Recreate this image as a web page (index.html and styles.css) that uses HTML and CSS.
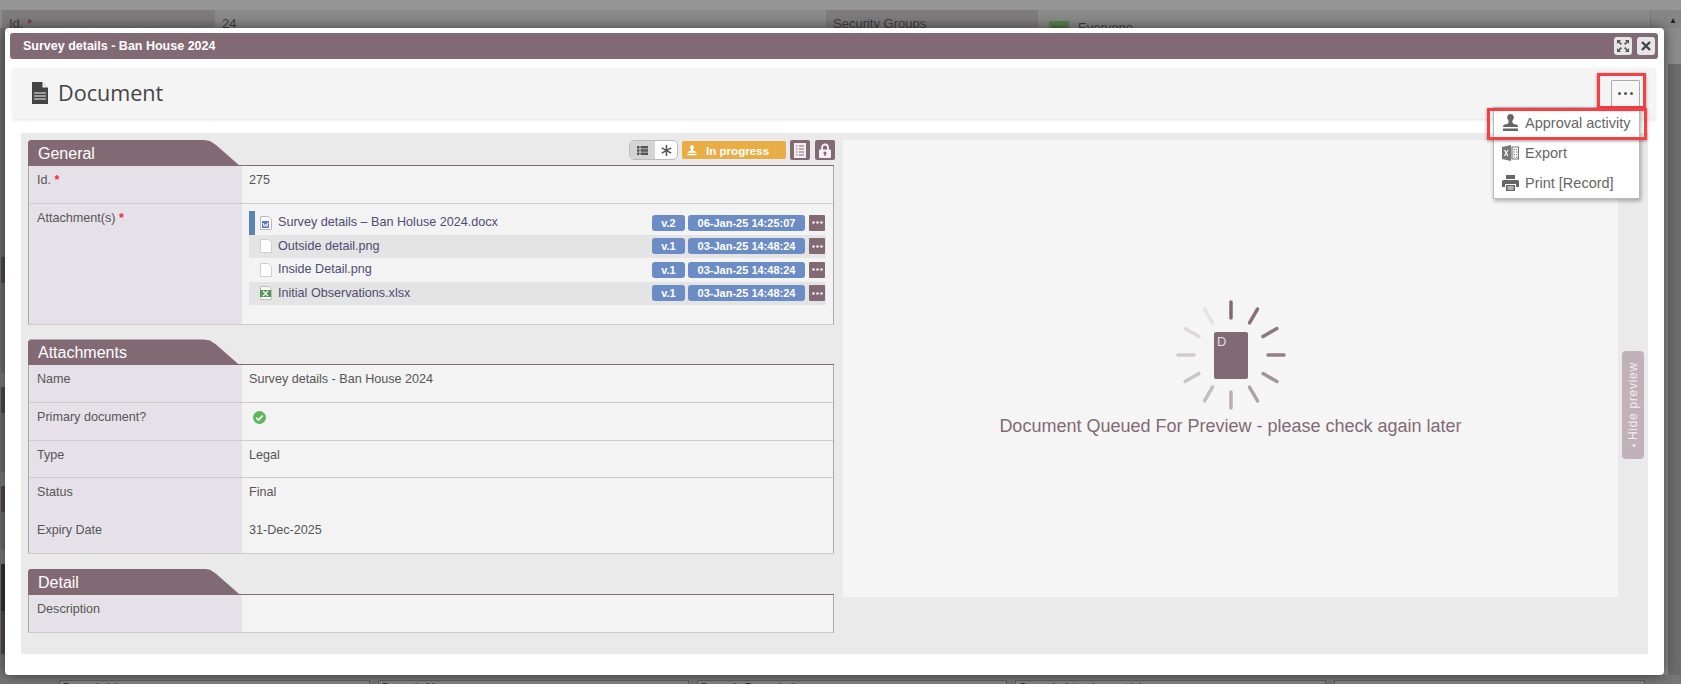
FILE: index.html
```html
<!DOCTYPE html>
<html lang="en">
<head>
    <meta charset="UTF-8">
    <meta name="viewport" content="width=device-width, initial-scale=1.0">
    <title>Survey details - Ban House 2024</title>
    <link rel="stylesheet" href="styles.css">
</head>
<body>
    <!-- Dimmed page behind the dialog -->
    <div class="page">
        <div class="page-top"></div>
        <div class="page-row">
            <div class="page-label page-label-first">Id. <span class="req-dim">*</span></div>
            <div class="page-value page-value-first">24</div>
            <div class="page-label page-label-second">Security Groups</div>
            <div class="page-value page-value-second"><span class="page-badge">RW</span>Everyone</div>
            <div class="page-scroll">&#9650;</div>
        </div>
        <div class="page-mid">
            <div class="strip">
                <div class="strip-gap"></div>
                <div class="strip-dark"></div><div class="strip-mid"></div>
                <div class="strip-light"></div>
                <div class="strip-dark"></div><div class="strip-mid2"></div>
                <div class="strip-light"></div>
                <div class="strip-dark"></div><div class="strip-mid3"></div>
                <div class="strip-light"></div>
                <div class="strip-black"></div>
                <div class="strip-dark strip-tall"></div>
            </div>
            <div class="scrollbar"></div>
        </div>
        <div class="page-foot">
            <div class="search-box">Search Id</div>
            <div class="search-box">Search Name</div>
            <div class="search-box">Search Description</div>
            <div class="search-box">Search Attachment(s)</div>
            <div class="search-box">&#9650;</div>
        </div>
    </div>

    <div class="modal">
        <div class="modal-title">
            <span class="modal-title-text">Survey details - Ban House 2024</span>
            <button class="title-btn">
                <svg width="14" height="14" viewBox="0 0 14 14"><path d="M1 1h4L3.6 2.4 6 4.8 4.8 6 2.4 3.6 1 5zM13 1v4l-1.4-1.4L9.2 6 8 4.8l2.400-2.400L9 1zM1 13V9l1.400 1.400L4.800 8 6 9.200l-2.400 2.400L5 13zM13 13H9l1.400-1.400L8 9.200 9.200 8l2.400 2.400L13 9z" fill="#555"/></svg>
            </button>
            <button class="title-btn">
                <svg width="12" height="12" viewBox="0 0 12 12"><path d="M2 2l8 8M10 2l-8 8" stroke="#444" stroke-width="2.400" fill="none"/></svg>
            </button>
        </div>

        <div class="doc-header">
            <svg class="doc-icon" width="16" height="22" viewBox="0 0 16 22"><path d="M0 0h10l6 6v16H0z" fill="#444"/><path d="M10.500 0.500v5h5z" fill="#f4f4f4"/><path d="M2 11h12M2 14h12M2 17h12" stroke="#f4f4f4" stroke-width="1"/></svg>
            <h1 class="doc-title">Document</h1>
            <button class="more-btn">
                <svg width="15" height="3" viewBox="0 0 15 3"><circle cx="1.500" cy="1.500" r="1.500" fill="#555"/><circle cx="7.500" cy="1.500" r="1.500" fill="#555"/><circle cx="13.500" cy="1.500" r="1.500" fill="#555"/></svg>
            </button>

            <div class="menu">
                <div class="menu-item">
                    <svg width="17" height="18" viewBox="0 0 17 18"><path d="M8.500 0a3.500 3.500 0 0 1 2.400 6c-.6.6-.8 1.300-.5 2.200.4 1.200 1.200 1.800 2.600 2.100 2 .4 3 .9 3 2.700H1c0-1.800 1-2.300 3-2.700 1.400-.3 2.200-.9 2.600-2.100.3-.9.1-1.600-.5-2.200A3.500 3.500 0 0 1 8.500 0zM1 14.500h15V17H1z" fill="#666"/></svg>
                    Approval activity
                </div>
                <div class="menu-item">
                    <svg width="17" height="16" viewBox="0 0 17 16"><path d="M0 2l9-2v16l-9-2z" fill="#777"/><path d="M2.500 5l3.500 6M6 5l-3.500 6" stroke="#fff" stroke-width="1.200"/><path d="M10 2h6.500v12H10zM11.500 4.500h1.500M14 4.500h1.500M11.500 7h1.500M14 7h1.500M11.500 9.500h1.500M14 9.500h1.500M11.500 12h1.500M14 12h1.500" stroke="#777" stroke-width="1.200" fill="none"/></svg>
                    Export
                </div>
                <div class="menu-item">
                    <svg width="17" height="16" viewBox="0 0 17 16"><path d="M4 0h9v4H4zM1.500 5h14A1.500 1.500 0 0 1 17 6.500V12h-3V9H3v3H0V6.500A1.500 1.500 0 0 1 1.500 5zM4 10h9v6H4z" fill="#666"/><path d="M5.500 12h6M5.500 14h6" stroke="#fff"/></svg>
                    Print [Record]
                </div>
            </div>
            <div class="mark mark-more"></div>
            <div class="mark mark-item"></div>
        </div>

        <div class="content">
            <div class="form-col">
                <div class="section-head">
                    <h2 class="section-tab">General</h2>
                    <div class="tools">
                        <div class="toggle">
                            <span class="toggle-on"><svg width="11" height="9" viewBox="0 0 11 9"><path d="M0 0h2.500v2.500H0zM3.500 0H11v2.500H3.500zM0 3.250h2.500v2.500H0zM3.500 3.250H11v2.500H3.500zM0 6.500h2.500V9H0zM3.500 6.500H11V9H3.500z" fill="#555"/></svg></span>
                            <span class="toggle-off"><svg width="11" height="11" viewBox="0 0 11 11"><path d="M5.500 0v11M.8 2.800l9.400 5.400M10.200 2.800L.8 8.200" stroke="#555" stroke-width="1.500"/></svg></span>
                        </div>
                        <div class="status">
                            <svg width="10" height="11" viewBox="0 0 17 18"><path d="M8.500 0a3.500 3.500 0 0 1 2.400 6c-.6.6-.8 1.300-.5 2.200.4 1.200 1.200 1.800 2.600 2.100 2 .4 3 .9 3 2.700H1c0-1.800 1-2.300 3-2.700 1.400-.3 2.200-.9 2.600-2.100.3-.9.1-1.600-.5-2.200A3.500 3.500 0 0 1 8.500 0zM1 14.500h15V17H1z" fill="#fff"/></svg>
                            In progress
                        </div>
                        <button class="tool-btn">
                            <svg width="12" height="15" viewBox="0 0 12 15"><path d="M0 0h12v15H0z" fill="#f2eef0"/><path d="M2 3h1.500M5 3h5M2 6h1.500M5 6h5M2 9h1.500M5 9h5M2 12h1.500M5 12h5" stroke="#826a75" stroke-width="1.200"/></svg>
                        </button>
                        <button class="tool-btn tool-btn-last">
                            <svg width="12" height="15" viewBox="0 0 12 15"><path d="M3 7V4.500a3 3 0 0 1 6 0V7" stroke="#f5f1f3" stroke-width="1.800" fill="none"/><path d="M1 6.500h10a1 1 0 0 1 1 1V14a1 1 0 0 1-1 1H1a1 1 0 0 1-1-1V7.500a1 1 0 0 1 1-1z" fill="#f5f1f3"/><circle cx="6" cy="10" r="1.600" fill="#826a75"/><path d="M5.300 10h1.400v3H5.300z" fill="#826a75"/></svg>
                        </button>
                    </div>
                </div>
                <div class="form-table">
                    <div class="form-row form-row-line">
                        <div class="form-label">Id. <span class="req">*</span></div>
                        <div class="form-value">275</div>
                    </div>
                    <div class="form-row form-row-files">
                        <div class="form-label">Attachment(s)<span class="req"> *</span></div>
                        <div class="form-value form-value-files">
                            <div class="file file-primary">
                                <svg class="file-icon" width="12" height="14" viewBox="0 0 12 14"><path d="M.5.5h8l3 3v10H.5z" fill="#fff" stroke="#b8b8c4"/><path d="M2 5h7v7H2z" fill="#5a78c8"/><path d="M3 7l1.300 3.500L5.600 8l1.200 2.500L8 6.500" stroke="#fff" fill="none"/></svg>
                                <span class="file-name">Survey details &ndash; Ban Holuse 2024.docx</span>
                                <span class="badge badge-ver">v.2</span>
                                <span class="badge badge-date">06-Jan-25 14:25:07</span>
                                <span class="dots"><svg width="11" height="3" viewBox="0 0 11 3"><circle cx="1.500" cy="1.500" r="1.300" fill="#f4f0f2"/><circle cx="5.500" cy="1.500" r="1.300" fill="#f4f0f2"/><circle cx="9.500" cy="1.500" r="1.300" fill="#f4f0f2"/></svg></span>
                            </div>
                            <div class="file file-alt">
                                <svg class="file-icon" width="12" height="14" viewBox="0 0 12 14"><path d="M.5.5h8l3 3v10H.5z" fill="#fff" stroke="#cfcfcf"/></svg>
                                <span class="file-name">Outside detail.png</span>
                                <span class="badge badge-ver">v.1</span>
                                <span class="badge badge-date">03-Jan-25 14:48:24</span>
                                <span class="dots"><svg width="11" height="3" viewBox="0 0 11 3"><circle cx="1.500" cy="1.500" r="1.300" fill="#f4f0f2"/><circle cx="5.500" cy="1.500" r="1.300" fill="#f4f0f2"/><circle cx="9.500" cy="1.500" r="1.300" fill="#f4f0f2"/></svg></span>
                            </div>
                            <div class="file">
                                <svg class="file-icon" width="12" height="14" viewBox="0 0 12 14"><path d="M.5.5h8l3 3v10H.5z" fill="#fff" stroke="#cfcfcf"/></svg>
                                <span class="file-name">Inside Detail.png</span>
                                <span class="badge badge-ver">v.1</span>
                                <span class="badge badge-date">03-Jan-25 14:48:24</span>
                                <span class="dots"><svg width="11" height="3" viewBox="0 0 11 3"><circle cx="1.500" cy="1.500" r="1.300" fill="#f4f0f2"/><circle cx="5.500" cy="1.500" r="1.300" fill="#f4f0f2"/><circle cx="9.500" cy="1.500" r="1.300" fill="#f4f0f2"/></svg></span>
                            </div>
                            <div class="file file-alt">
                                <svg class="file-icon" width="12" height="14" viewBox="0 0 12 14"><path d="M.5.5h8l3 3v10H.5z" fill="#fff" stroke="#bbb"/><path d="M0 4h11v7H0z" fill="#4f9a4f"/><path d="M3 5l5 5M8 5l-5 5" stroke="#fff" stroke-width="1.300"/></svg>
                                <span class="file-name">Initial Observations.xlsx</span>
                                <span class="badge badge-ver">v.1</span>
                                <span class="badge badge-date">03-Jan-25 14:48:24</span>
                                <span class="dots"><svg width="11" height="3" viewBox="0 0 11 3"><circle cx="1.500" cy="1.500" r="1.300" fill="#f4f0f2"/><circle cx="5.500" cy="1.500" r="1.300" fill="#f4f0f2"/><circle cx="9.500" cy="1.500" r="1.300" fill="#f4f0f2"/></svg></span>
                            </div>
                        </div>
                    </div>
                </div>

                <div class="section-head section-next">
                    <h2 class="section-tab">Attachments</h2>
                </div>
                <div class="form-table">
                    <div class="form-row form-row-line">
                        <div class="form-label">Name</div>
                        <div class="form-value">Survey details - Ban House 2024</div>
                    </div>
                    <div class="form-row form-row-line">
                        <div class="form-label">Primary document?</div>
                        <div class="form-value form-value-check">
                            <svg width="13" height="13" viewBox="0 0 13 13"><circle cx="6.500" cy="6.500" r="6.500" fill="#5cb85c"/><path d="M3.300 6.800l2.200 2.200 4.200-4.400" stroke="#fff" stroke-width="1.800" fill="none"/></svg>
                        </div>
                    </div>
                    <div class="form-row form-row-line">
                        <div class="form-label">Type</div>
                        <div class="form-value">Legal</div>
                    </div>
                    <div class="form-row">
                        <div class="form-label">Status</div>
                        <div class="form-value">Final</div>
                    </div>
                    <div class="form-row">
                        <div class="form-label">Expiry Date</div>
                        <div class="form-value">31-Dec-2025</div>
                    </div>
                </div>

                <div class="section-head section-next">
                    <h2 class="section-tab">Detail</h2>
                </div>
                <div class="form-table">
                    <div class="form-row">
                        <div class="form-label">Description</div>
                        <div class="form-value"></div>
                    </div>
                </div>
            </div>

            <div class="preview">
                <svg class="spinner" width="110" height="110" viewBox="-55 -55 110 110">
                    <g stroke="#826a75" stroke-width="3.500" stroke-linecap="round">
                        <path d="M0-53V-37" opacity="1"/>
                        <path d="M0-53V-37" opacity=".95" transform="rotate(30)"/>
                        <path d="M0-53V-37" opacity=".9" transform="rotate(60)"/>
                        <path d="M0-53V-37" opacity=".85" transform="rotate(90)"/>
                        <path d="M0-53V-37" opacity=".7" transform="rotate(120)"/>
                        <path d="M0-53V-37" opacity=".6" transform="rotate(150)"/>
                        <path d="M0-53V-37" opacity=".5" transform="rotate(180)"/>
                        <path d="M0-53V-37" opacity=".4" transform="rotate(210)"/>
                        <path d="M0-53V-37" opacity=".35" transform="rotate(240)"/>
                        <path d="M0-53V-37" opacity=".3" transform="rotate(270)"/>
                        <path d="M0-53V-37" opacity=".2" transform="rotate(300)"/>
                        <path d="M0-53V-37" opacity=".12" transform="rotate(330)"/>
                    </g>
                    <rect x="-17" y="-23" width="34" height="47" rx="2" fill="#826a75"/>
                    <text x="-14" y="-9" class="spinner-letter">D</text>
                </svg>
                <div class="preview-text">Document Queued For Preview - please check again later</div>
            </div>

            <div class="hide-tab"><span class="hide-arrow">&#9650;</span> Hide preview</div>
        </div>
    </div>
</body>
</html>
```

FILE: styles.css
```css
/* General Reset */
* {
    margin: 0;
    padding: 0;
    box-sizing: border-box;
    font-family: "Liberation Sans", Arial, sans-serif;
}

body {
    background: #8c8c8c;
    height: 684px;
    overflow: hidden;
    font-size: 12.600px;
    color: #555;
}

button {
    border: none;
    cursor: pointer;
}

/* Dimmed page behind the dialog */
.page {
    height: 684px;
    display: flex;
    flex-direction: column;
}

.page-top {
    height: 10px;
    background: #959595;
}

.page-row {
    height: 18px;
    display: flex;
    background: #8b8b8b;
    font-size: 13px;
    color: #3e3e3e;
    overflow: hidden;
    line-height: 16px;
}

.page-label {
    background: #7f7c7e;
    padding: 6px 0 0 7px;
}

.req-dim {
    color: #7a2a2a;
}

.page-label-first {
    width: 213px;
    margin-left: 2px;
}

.page-value-first {
    width: 611px;
    padding: 6px 0 0 7px;
}

.page-label-second {
    width: 212px;
}

.page-value-second {
    width: 613px;
    padding: 10px 0 0 11px;
    border-right: 1px solid #777;
}

.page-badge {
    display: inline-block;
    width: 20px;
    height: 14px;
    margin-right: 9px;
    background: #5a8650;
    color: #3a6034;
    font-size: 9px;
    text-align: center;
}

.page-scroll {
    flex: 1;
    text-align: right;
    padding: 3px 4px 0 0;
    font-size: 8px;
    color: #222;
    background: #868686;
}

.page-mid {
    flex: 1;
    display: flex;
    justify-content: space-between;
}

.strip {
    width: 5px;
    padding-left: 1px;
    display: flex;
    flex-direction: column;
    background: #757575;
}

.strip-gap { height: 229px; background: #6e6e6e; }
.strip-dark { height: 26px; background: #554a50; flex-shrink: 0; }
.strip-mid { height: 90px; background: #6e6e6e; }
.strip-mid2 { height: 59px; background: #6e6e6e; }
.strip-mid3 { height: 38px; background: #6e6e6e; }
.strip-light { height: 14px; background: #808080; }
.strip-black { height: 47px; background: #333; }
.strip-tall { height: 43px; }

.scrollbar {
    width: 13px;
    margin-top: 36px;
    background: #6c6c6c;
}

.page-foot {
    height: 9px;
    padding: 5px 36px 0 59px;
    display: grid;
    grid-template-columns: repeat(5, 1fr);
    gap: 8px;
    background: #777;
    overflow: hidden;
}

.search-box {
    height: 20px;
    border: 1px solid #5f5f5f;
    background: #868686;
    font-size: 13px;
    line-height: 13px;
    padding: 0 2px;
    color: #333;
}

/* Dialog */
.modal {
    position: absolute;
    left: 5px;
    top: 28px;
    width: 1659px;
    height: 647px;
    padding: 5px 6px 0 5px;
    background: #fff;
    border-radius: 4px;
    box-shadow: 0 0 14px rgba(0, 0, 0, 0.55);
}

.modal-title {
    height: 26px;
    display: flex;
    align-items: center;
    gap: 5px;
    padding: 0 3px 0 13px;
    background: #826a75;
    border-radius: 3px;
}

.modal-title-text {
    flex: 1;
    color: #fff;
    font-size: 12.500px;
    font-weight: bold;
}

.title-btn {
    width: 18px;
    height: 18px;
    display: flex;
    align-items: center;
    justify-content: center;
    background: #e6e6e6;
    border-radius: 3px;
}

.doc-header {
    position: relative;
    height: 51px;
    margin: 9px 3px 0 3px;
    padding: 0 15px 0 19px;
    display: flex;
    align-items: center;
    background: #f4f4f4;
    box-shadow: 0 1px 3px rgba(0, 0, 0, 0.12);
}

.doc-icon {
    margin-bottom: 2px;
}

.doc-title {
    flex: 1;
    margin: 0 0 2px 10px;
    font-family: "Open Sans", sans-serif;
    font-size: 21.600px;
    font-weight: normal;
    color: #444;
}

.more-btn {
    width: 29px;
    height: 28px;
    margin-top: 1px;
    padding-bottom: 2px;
    display: flex;
    align-items: center;
    justify-content: center;
    background: #f6f6f6;
    border: 1px solid #aaa;
    border-bottom: none;
    border-radius: 2px 2px 0 0;
}

.menu {
    position: absolute;
    right: 15px;
    top: 39px;
    width: 147px;
    height: 92px;
    background: #fff;
    border: 1px solid #bbb;
    box-shadow: 1px 2px 4px rgba(0, 0, 0, 0.3);
    z-index: 2;
}

.menu-item {
    height: 30px;
    display: flex;
    align-items: center;
    gap: 6px;
    padding-left: 8px;
    font-size: 14.500px;
    color: #666;
}

.mark {
    position: absolute;
    border: 3px solid #f44045;
    box-shadow: 0 1px 3px rgba(0, 0, 0, 0.4);
    z-index: 3;
}

.mark-more {
    left: 1584px;
    top: 5px;
    width: 49px;
    height: 36px;
}

.mark-item {
    left: 1474px;
    top: 40px;
    width: 160px;
    height: 32px;
}

.content {
    height: 521px;
    margin: 14px 10px 0 11px;
    padding: 7px 0 0 7px;
    display: flex;
    background: #eaeaea;
}

.form-col {
    width: 806px;
    flex-shrink: 0;
}

.section-head {
    height: 26px;
    display: flex;
    align-items: flex-start;
    justify-content: space-between;
    border-bottom: 1px solid #826a75;
}

.section-next {
    margin-top: 14.400px;
}

.section-tab {
    width: 212px;
    height: 26px;
    padding-left: 10px;
    background: #826a75;
    color: #fff;
    font-size: 16px;
    font-weight: normal;
    line-height: 28px;
    clip-path: polygon(0 2px, 2px 0, 176px 0, 182px 1px, 188px 5px, 212px 26px, 0 26px);
}

.tools {
    display: flex;
    align-items: center;
    height: 20px;
    margin-right: -1px;
}

.toggle {
    width: 49px;
    height: 20px;
    margin-right: 4px;
    display: flex;
    border: 1px solid #bbb;
    border-radius: 5px;
    overflow: hidden;
    background: #fff;
}

.toggle-on {
    width: 25px;
    display: flex;
    align-items: center;
    justify-content: center;
    background: #d4d4d4;
}

.toggle-off {
    flex: 1;
    display: flex;
    align-items: center;
    justify-content: center;
}

.status {
    width: 104px;
    height: 18px;
    margin-right: 4px;
    display: flex;
    align-items: center;
    gap: 9px;
    padding-left: 5px;
    background: #e8ad45;
    border-radius: 2px;
    color: #fff;
    font-size: 11.600px;
    font-weight: bold;
}

.tool-btn {
    width: 20px;
    height: 20px;
    display: flex;
    align-items: center;
    justify-content: center;
    background: #826a75;
    border-radius: 2px;
}

.tool-btn-last {
    margin-left: 5px;
}

.form-table {
    border-left: 1px solid #aaa;
    border-right: 1px solid #aaa;
    border-bottom: 1px solid #ccc;
    background: #f3f3f3;
}

.form-row {
    display: flex;
    height: 37.600px;
}

.form-row-line {
    border-bottom: 1px solid #ccc;
}

.form-label {
    width: 213px;
    flex-shrink: 0;
    padding: 7px 0 0 8px;
    background: #e6e1e8;
    line-height: 15px;
}

.req {
    color: #e4313b;
    font-weight: bold;
}

.form-value {
    flex: 1;
    padding: 7px 7px 0;
    line-height: 15px;
}

.form-value-check {
    padding: 8px 0 0 11px;
}

.form-row-files {
    height: 120.400px;
}

.form-value-files {
    padding: 7.500px 7px 0;
}

.file {
    height: 23.500px;
    display: flex;
    align-items: center;
    padding-left: 11px;
    color: #504a73;
}

.file-alt {
    background: #e4e4e4;
}

.file-primary {
    padding-left: 5px;
    border-left: 6px solid #5b83b3;
}

.file-icon {
    flex-shrink: 0;
    margin-right: 6px;
}

.file-name {
    flex: 1;
}

.badge {
    height: 16px;
    margin-right: 3px;
    background: #6b8cc4;
    border-radius: 3px;
    color: #fff;
    font-size: 11px;
    font-weight: bold;
    line-height: 16px;
    text-align: center;
}

.badge-ver {
    width: 33px;
}

.badge-date {
    width: 117px;
    margin-right: 4px;
}

.dots {
    width: 16px;
    height: 16px;
    margin-right: 1px;
    display: flex;
    align-items: center;
    justify-content: center;
    background: #826a75;
    border-radius: 1px;
}

.preview {
    width: 775px;
    height: 457px;
    margin-left: 9px;
    flex-shrink: 0;
    padding-top: 160px;
    display: flex;
    flex-direction: column;
    align-items: center;
    background: #f5f5f5;
}

.spinner-letter {
    font-size: 13px;
    fill: #e4dde1;
}

.preview-text {
    margin-top: 6px;
    font-size: 18px;
    color: #826a75;
}

.hide-tab {
    width: 22px;
    height: 108px;
    margin: 211px 0 0 4px;
    padding: 10px 0 0 0;
    display: flex;
    align-items: center;
    writing-mode: vertical-rl;
    transform: rotate(180deg);
    background: #c3b1b9;
    border-radius: 4px;
    color: #f3edf0;
    font-size: 12px;
    letter-spacing: 0.700px;
}

.hide-arrow {
    font-size: 6px;
    margin-bottom: 2px;
    transform: rotate(90deg);
}
```
